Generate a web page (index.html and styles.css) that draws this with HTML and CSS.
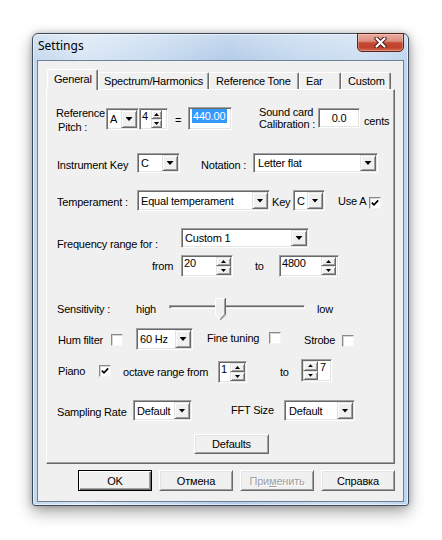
FILE: index.html
```html
<!DOCTYPE html>
<html>
<head>
<meta charset="utf-8">
<title>Settings</title>
<link rel="stylesheet" href="styles.css">
</head>
<body>
<div class="window">
  <div class="titlebar">
    <span class="title">Settings</span>
    <div class="close">
      <svg width="13" height="11" viewBox="0 0 13 11"><path d="M2.5 1.5L10.5 9.5M10.5 1.5L2.5 9.5" stroke="#4a1c16" stroke-width="4.2" stroke-linecap="round"/><path d="M2.5 1.5L10.5 9.5M10.5 1.5L2.5 9.5" stroke="#fff" stroke-width="2.2" stroke-linecap="round"/></svg>
    </div>
  </div>
  <div class="client">
    <div class="tabs">
      <div class="tab sel t-gen">General</div>
      <div class="tab t-spec">Spectrum/Harmonics</div>
      <div class="tab t-ref">Reference Tone</div>
      <div class="tab t-ear">Ear</div>
      <div class="tab t-cus">Custom</div>
    </div>
    <div class="panel">
      <div class="row r1">
        <div class="lbl ref-lbl"><div>Reference</div><div class="indent">Pitch :</div></div>
        <div class="combo sunken c-a"><span class="ctext">A</span><span class="ddbtn raised"><i class="tri"></i></span></div>
        <div class="spin sunken s-4"><span class="stext w10">4</span><div class="updown w11"><span class="ud raised"><i class="up"></i></span><span class="ud raised"><i class="dn"></i></span></div></div>
        <div class="lbl eq">=</div>
        <div class="edit sunken e-440"><span class="seltext">440.00</span></div>
        <div class="lbl sc-lbl"><div>Sound card</div><div>Calibration :</div></div>
        <div class="edit sunken e-cal">0.0</div>
        <div class="lbl cents">cents</div>
      </div>

      <div class="row r2">
        <div class="lbl ik">Instrument Key</div>
        <div class="combo sunken c-c1"><span class="ctext">C</span><span class="ddbtn raised"><i class="tri"></i></span></div>
        <div class="lbl nt">Notation :</div>
        <div class="combo sunken c-lf"><span class="ctext pad3">Letter flat</span><span class="ddbtn raised"><i class="tri"></i></span></div>
      </div>

      <div class="row r3">
        <div class="lbl tm">Temperament :</div>
        <div class="combo sunken c-eq"><span class="ctext">Equal temperament</span><span class="ddbtn raised"><i class="tri"></i></span></div>
        <div class="lbl ky">Key</div>
        <div class="combo sunken c-c2"><span class="ctext">C</span><span class="ddbtn raised"><i class="tri"></i></span></div>
        <div class="lbl ua">Use A</div>
        <div class="cb cb-ua"><svg width="8" height="8" viewBox="0 0 8 8"><path d="M0.8 3.6L3 5.8L7.2 1.4" fill="none" stroke="#000" stroke-width="1.7"/></svg></div>
      </div>

      <div class="row r4">
        <div class="lbl fr">Frequency range for :</div>
        <div class="combo sunken c-cu"><span class="ctext">Custom 1</span><span class="ddbtn raised"><i class="tri"></i></span></div>
      </div>

      <div class="row r4b">
        <div class="lbl from">from</div>
        <div class="spin sunken s-20"><span class="stext w33">20</span><div class="updown w15"><span class="ud raised"><i class="up"></i></span><span class="ud raised"><i class="dn"></i></span></div></div>
        <div class="lbl to1">to</div>
        <div class="spin sunken s-4800"><span class="stext w40">4800</span><div class="updown w15"><span class="ud raised"><i class="up"></i></span><span class="ud raised"><i class="dn"></i></span></div></div>
      </div>

      <div class="row r5">
        <div class="lbl sens">Sensitivity :</div>
        <div class="lbl high">high</div>
        <div class="slider">
          <div class="track"></div>
          <svg class="thumb" width="11" height="23" viewBox="0 0 11 23"><path d="M0 0H10V16.5L5 21.5L0 16.5Z" fill="#f0f0f0"/><path d="M0.5 16.5V0.5H9.5" fill="none" stroke="#fff"/><path d="M0.5 16.5L5.5 21.5" fill="none" stroke="#fff"/><path d="M10.5 0V16.8L5.3 22" fill="none" stroke="#696969"/><path d="M9.5 1V16.4L5.2 20.7" fill="none" stroke="#a0a0a0"/></svg>
        </div>
        <div class="lbl low">low</div>
      </div>

      <div class="row r6">
        <div class="lbl hum">Hum filter</div>
        <div class="cb cb-hum"></div>
        <div class="combo sunken c-60"><span class="ctext">60 Hz</span><span class="ddbtn raised"><i class="tri"></i></span></div>
        <div class="lbl ft">Fine tuning</div>
        <div class="cb cb-ft"></div>
        <div class="lbl st">Strobe</div>
        <div class="cb cb-st"></div>
      </div>

      <div class="row r7">
        <div class="lbl piano">Piano</div>
        <div class="cb cb-pi"><svg width="8" height="8" viewBox="0 0 8 8"><path d="M0.8 3.6L3 5.8L7.2 1.4" fill="none" stroke="#000" stroke-width="1.7"/></svg></div>
        <div class="lbl oct">octave range from</div>
        <div class="spin sunken s-1"><span class="stext w10">1</span><div class="updown w15"><span class="ud raised"><i class="up"></i></span><span class="ud raised"><i class="dn"></i></span></div></div>
        <div class="lbl to2">to</div>
        <div class="spin sunken s-7"><div class="updown w15"><span class="ud raised"><i class="up"></i></span><span class="ud raised"><i class="dn"></i></span></div><span class="stext pl2">7</span></div>
      </div>

      <div class="row r8">
        <div class="lbl samp">Sampling Rate</div>
        <div class="combo sunken c-d1"><span class="ctext">Default</span><span class="ddbtn raised"><i class="tri"></i></span></div>
        <div class="lbl fft">FFT Size</div>
        <div class="combo sunken c-d2"><span class="ctext pad3">Default</span><span class="ddbtn raised"><i class="tri"></i></span></div>
      </div>

      <div class="row r9">
        <div class="btn btn-def">Defaults</div>
      </div>
    </div>
    <div class="btnrow">
      <div class="btn default">OK</div>
      <div class="btn">Отмена</div>
      <div class="btn disabled">При<u>м</u>енить</div>
      <div class="btn">Справка</div>
    </div>
  </div>
</div>
</body>
</html>
```
FILE: styles.css
```css
html, body {
  margin: 0;
  background: #fff;
}
body {
  width: 442px;
  height: 540px;
  overflow: hidden;
  font-family: "Liberation Sans", Arial, sans-serif;
  font-size: 11px;
  letter-spacing: -0.2px;
  color: #000;
}

/* ---------- window frame ---------- */
.window {
  margin: 33px 0 0 32px;
  width: 377px;
  height: 473px;
  box-sizing: border-box;
  border: 1px solid #3e4b5c;
  border-radius: 6px 6px 3px 3px;
  padding: 0 4px 3px 4px;
  background:
    linear-gradient(180deg, rgba(255,255,255,0.28), rgba(255,255,255,0) 26px),
    linear-gradient(90deg, #c4d8ee 0%, #d9e6f5 14%, #c9dcf0 32%, #b4cce8 52%, #c6daef 72%, #cfdff2 88%, #bfd5ee 100%);
  box-shadow: inset 0 0 0 1px rgba(255,255,255,0.55), 0 6px 16px rgba(0,0,0,0.36), 0 0 6px rgba(0,0,0,0.22);
}
.titlebar {
  display: flex;
  justify-content: space-between;
  align-items: flex-start;
  height: 26px;
}
.title {
  font-family: "Noto Sans", "Liberation Sans", sans-serif;
  font-size: 12px;
  letter-spacing: 0;
  line-height: 19px;
  padding: 2px 0 0 1px;
}
.close {
  margin-top: -1px;
  width: 47px;
  height: 19px;
  box-sizing: border-box;
  border: 1px solid #5a2219;
  border-radius: 0 0 5px 5px;
  background: linear-gradient(180deg, #e8ab9e 0%, #dc8f7f 42%, #c54a35 52%, #c0412b 78%, #d26a52 100%);
  box-shadow: inset 0 0 0 1px rgba(255,230,220,0.35);
  display: flex;
  align-items: center;
  justify-content: center;
}

/* ---------- client area ---------- */
.client {
  height: 442px;
  box-sizing: border-box;
  border: 1px solid #6f8196;
  background: #f0f0f0;
  padding: 8px 0 0 8px;
}

.tabs {
  display: flex;
  align-items: flex-end;
  height: 20px;
  padding-left: 1px;
  position: relative;
  z-index: 1;
}
.tab {
  box-sizing: border-box;
  height: 17px;
  border-left: 1px solid #fff;
  border-top: 1px solid #fff;
  border-right: 1px solid #696969;
  border-radius: 2px 2px 0 0;
  box-shadow: inset -1px 0 #a0a0a0;
  background: #f0f0f0;
  padding-left: 6px;
  line-height: 16px;
  white-space: nowrap;
}
.tab.sel {
  height: 21px;
  margin-bottom: -1px;
  padding-top: 1px;
}
.t-gen { width: 51px; }
.t-spec { width: 111px; padding-left: 5px; }
.t-ref { width: 90px; }
.t-ear { width: 42px; }
.t-cus { width: 50px; }

.panel {
  width: 349px;
  height: 375px;
  box-sizing: border-box;
  border: 1px solid;
  border-color: #fff #696969 #696969 #fff;
  box-shadow: inset -1px -1px #a0a0a0;
}

.btnrow {
  width: 349px;
  display: flex;
  justify-content: flex-end;
  gap: 7px;
  margin-top: 6px;
}

/* ---------- generic controls ---------- */
.raised {
  box-sizing: border-box;
  background: #f0f0f0;
  border: 1px solid;
  border-color: #e3e3e3 #696969 #696969 #e3e3e3;
  box-shadow: inset 1px 1px #fff, inset -1px -1px #a0a0a0;
}
.sunken {
  box-sizing: border-box;
  background: #fff;
  border: 1px solid;
  border-color: #a0a0a0 #fff #fff #a0a0a0;
  padding: 1px;
  box-shadow: inset 1px 1px #696969, inset -1px -1px #e3e3e3;
}
.btn {
  width: 74px;
  height: 21px;
  box-sizing: border-box;
  background: #f0f0f0;
  border: 1px solid;
  border-color: #fff #696969 #696969 #fff;
  box-shadow: inset 1px 1px #e3e3e3, inset -1px -1px #a0a0a0;
  display: flex;
  align-items: center;
  justify-content: center;
  white-space: nowrap;
}
.btn.default {
  border-color: #000;
  box-shadow: inset 1px 1px #fff, inset -1px -1px #696969, inset -2px -2px #a0a0a0;
}
.btn.disabled {
  color: #a0a0a0;
  text-shadow: 1px 1px 0 #fff;
}

.combo {
  display: flex;
  flex: none;
}
.ctext {
  flex: 1;
  display: flex;
  align-items: center;
  padding-left: 2px;
  white-space: nowrap;
  overflow: hidden;
}
.ctext.pad3 { padding-left: 3px; }
.ddbtn {
  width: 16px;
  flex: none;
  display: flex;
  align-items: center;
  justify-content: center;
}
.tri {
  display: block;
  width: 7px;
  height: 4px;
  background: #000;
  clip-path: polygon(0 0, 100% 0, 50% 100%);
}

.spin {
  display: flex;
  flex: none;
}
.stext {
  line-height: 13px;
  padding-left: 1px;
  box-sizing: border-box;
}
.stext.pl2 { padding-left: 2px; }
.w10 { width: 10px; }
.w33 { width: 33px; }
.w40 { width: 40px; }
.updown {
  display: flex;
  flex-direction: column;
  flex: none;
}
.updown.w11 { width: 11px; }
.updown.w15 { width: 15px; }
.ud {
  flex: 1;
  display: flex;
  align-items: center;
  justify-content: center;
}
.up, .dn {
  display: block;
  width: 5px;
  height: 3px;
  background: #000;
}
.up { clip-path: polygon(50% 0, 100% 100%, 0 100%); }
.dn { clip-path: polygon(0 0, 100% 0, 50% 100%); }

.edit { flex: none; }

.cb {
  flex: none;
  width: 12px;
  height: 12px;
  box-sizing: border-box;
  background: #fff;
  border: 1px solid;
  border-color: #8a8a8a #f4f4f4 #f4f4f4 #8a8a8a;
  box-shadow: inset 1px 1px #d6d6d6;
  display: flex;
  align-items: center;
  justify-content: center;
}

.lbl {
  flex: none;
  box-sizing: border-box;
  white-space: nowrap;
}

/* ---------- rows ---------- */
.row {
  display: flex;
  align-items: flex-start;
}
.r1 { margin-top: 16px; height: 26px; }
.r2 { margin-top: 21px; height: 20px; }
.r3 { margin-top: 17px; height: 21px; }
.r4 { margin-top: 17px; height: 20px; }
.r4b { margin-top: 7px; height: 22px; }
.r5 { margin-top: 20px; height: 24px; }
.r6 { margin-top: 7px; height: 22px; }
.r7 { margin-top: 9px; height: 24px; }
.r8 { margin-top: 17px; height: 21px; }
.r9 { margin-top: 13px; height: 20px; }

/* row 1 */
.ref-lbl { margin-left: 9px; width: 50px; line-height: 14px; }
.indent { padding-left: 2px; }
.c-a { width: 33px; height: 22px; margin-top: 2px; }
.s-4 { width: 29px; height: 22px; margin-top: 2px; }
.eq { width: 20px; text-align: center; line-height: 14px; margin-top: 7px; }
.e-440 { width: 44px; height: 23px; margin-top: 1px; padding: 1px 0 0 3px; }
.seltext {
  display: inline-block;
  background: #3399ff;
  color: #fff;
  line-height: 14px;
  padding: 0 2px 0 1px;
}
.sc-lbl { width: 86px; padding-left: 27px; line-height: 12px; }
.e-cal { width: 42px; height: 20px; margin-top: 2px; text-align: center; line-height: 16px; }
.cents { margin-left: 4px; line-height: 14px; margin-top: 8px; }

/* row 2 */
.ik { margin-left: 10px; width: 80px; line-height: 20px; padding-top: 2px; }
.c-c1 { width: 43px; height: 20px; }
.nt { width: 73px; padding-left: 21px; line-height: 20px; padding-top: 2px; }
.c-lf { width: 125px; height: 20px; }

/* row 3 */
.tm { margin-left: 10px; width: 80px; line-height: 21px; padding-top: 2px; }
.c-eq { width: 133px; height: 21px; }
.ky { width: 23px; padding-left: 2px; line-height: 21px; padding-top: 2px; }
.c-c2 { width: 32px; height: 21px; }
.ua { width: 44px; padding-left: 13px; line-height: 21px; padding-top: 1px; }
.cb-ua { margin-top: 7px; }

/* row 4 */
.fr { margin-left: 10px; width: 124px; line-height: 20px; padding-top: 6px; }
.c-cu { width: 128px; height: 20px; }
.from { margin-left: 105px; width: 29px; line-height: 22px; }
.s-20 { width: 52px; height: 22px; }
.to1 { width: 46px; padding-left: 22px; line-height: 22px; }
.s-4800 { width: 60px; height: 22px; }

/* row 5 */
.sens { margin-left: 10px; width: 79px; line-height: 24px; }
.high { width: 33px; line-height: 24px; }
.slider {
  flex: none;
  position: relative;
  width: 136px;
  height: 24px;
}
.track {
  margin-top: 8px;
  height: 4px;
  box-sizing: border-box;
  border-top: 1px solid #a0a0a0;
  border-left: 1px solid #a0a0a0;
  border-bottom: 1px solid #fff;
  border-right: 1px solid #fff;
  background: #e3e3e3;
  box-shadow: inset 1px 1px #696969;
}
.thumb {
  position: absolute;
  left: 46px;
  top: 1px;
}
.low { margin-left: 12px; line-height: 24px; }

/* row 6 */
.hum { margin-left: 11px; width: 53px; line-height: 22px; padding-top: 1px; }
.cb-hum { margin-top: 6px; }
.c-60 { margin-left: 13px; width: 57px; height: 22px; }
.ft { margin-left: 14px; width: 62px; line-height: 20px; }
.cb-ft { margin-top: 4px; }
.st { margin-left: 23px; width: 38px; line-height: 22px; padding-top: 1px; }
.cb-st { margin-top: 7px; }

/* row 7 */
.piano { margin-left: 11px; width: 41px; line-height: 24px; }
.cb-pi { margin-top: 6px; }
.oct { margin-left: 12px; width: 95px; line-height: 24px; padding-top: 1px; }
.s-1 { width: 29px; height: 22px; margin-top: 2px; }
.to2 { width: 54px; padding-left: 33px; line-height: 24px; padding-top: 1px; }
.s-7 { width: 31px; height: 23px; }

/* row 8 */
.samp { margin-left: 10px; width: 76px; line-height: 21px; padding-top: 2px; }
.c-d1 { width: 59px; height: 21px; }
.fft { margin-left: 39px; width: 53px; line-height: 21px; }
.c-d2 { width: 71px; height: 21px; }

/* row 9 */
.btn-def { margin-left: 147px; width: 75px; height: 20px; }
```
